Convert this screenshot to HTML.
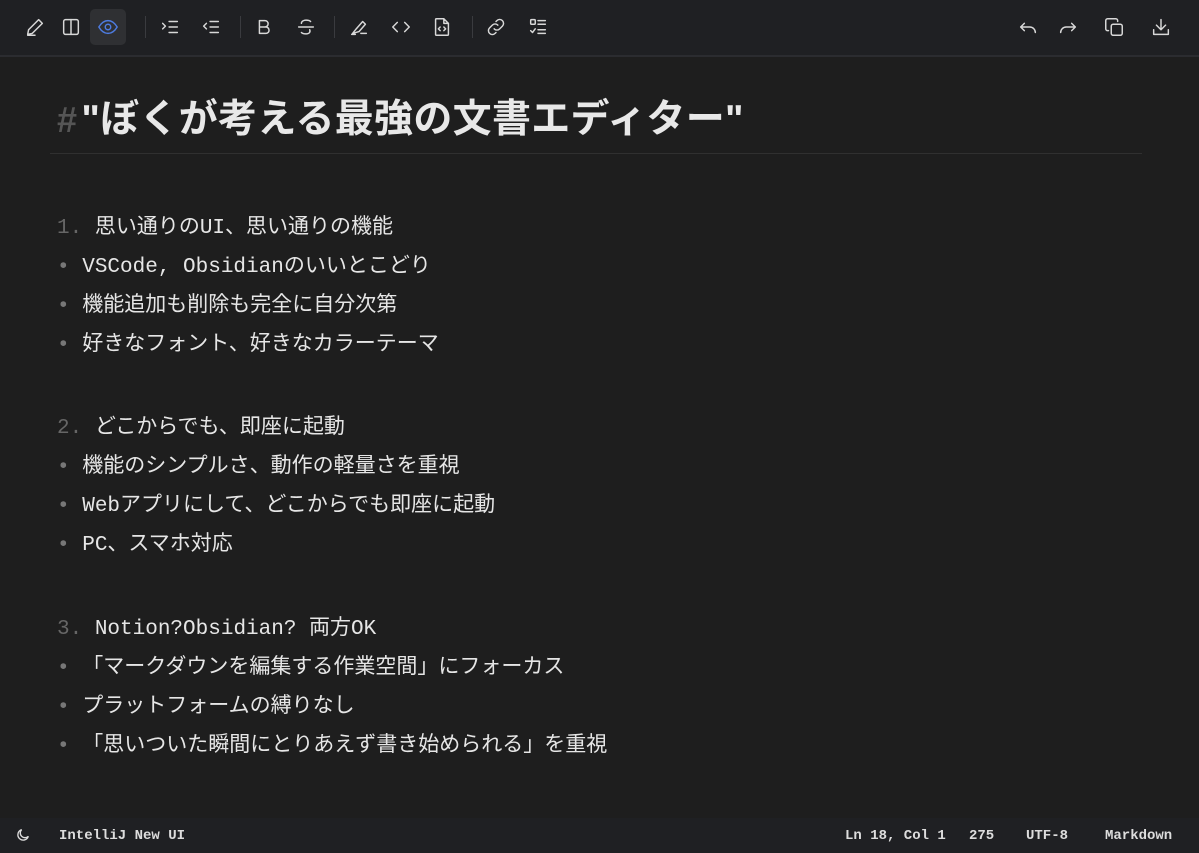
<!DOCTYPE html>
<html><head><meta charset="utf-8"><style>
*{margin:0;padding:0;box-sizing:border-box}
body{width:1199px;height:853px;background:#1e1e1e;color:#e6e6e6;overflow:hidden;position:relative;font-family:"Liberation Mono","Noto Sans CJK JP",monospace}
.tb{position:absolute;left:0;top:0;width:1199px;height:57px;background:#1f2023;border-bottom:2px solid #2b2c30}
.ic{position:absolute;top:9px;width:36px;height:36px;display:flex;align-items:center;justify-content:center}
.ic svg{width:22px;height:22px;fill:none;stroke:#d8d8d8;stroke-width:1.6;stroke-linecap:round;stroke-linejoin:round}
.sep{position:absolute;top:16px;width:1px;height:22px;background:#3a3b3f}
.h1{position:absolute;left:57px;top:88px;font-family:"Liberation Sans","Noto Sans CJK JP",sans-serif;font-weight:bold;font-size:39px;color:#e8e8e8;letter-spacing:0.3px}
.h1 span{color:#555;margin-right:4px;font-size:36px}
.hr{position:absolute;left:50px;top:153px;width:1092px;height:1px;background:#303030}
.l{position:absolute;font-size:21px;line-height:24px;white-space:nowrap}
.n{color:#666}
.b{color:#777}
.sb{position:absolute;left:0;top:818px;width:1199px;height:35px;background:#1f2023;font-size:14px;font-weight:bold;color:#ddd}
.sb div{position:absolute;top:10px}
</style></head><body>
<div class="tb">
<div class="ic" style="left:17px"><svg viewBox="0 0 24 24"><path d="M4 20l1-5L16 4l4 4L9 19z M4 21h8"/></svg></div>
<div class="ic" style="left:53px"><svg viewBox="0 0 24 24"><rect x="4" y="4" width="16" height="16" rx="2"/><path d="M12 4v16"/></svg></div>
<div class="ic" style="left:90px;background:#2f3033;border-radius:5px"><svg viewBox="0 0 24 24" style="stroke:#4d7be0"><path d="M2 12c3-5 6-7 10-7s7 2 10 7c-3 5-6 7-10 7s-7-2-10-7z"/><circle cx="12" cy="12" r="3"/></svg></div>
<div class="sep" style="left:145px"></div>
<div class="ic" style="left:152px"><svg viewBox="0 0 24 24"><path d="M4 8l3 3-3 3M11 6h9M11 12h9M11 18h9"/></svg></div>
<div class="ic" style="left:193px"><svg viewBox="0 0 24 24"><path d="M7 8l-3 3 3 3M11 6h9M11 12h9M11 18h9"/></svg></div>
<div class="sep" style="left:240px"></div>
<div class="ic" style="left:246px"><svg viewBox="0 0 24 24"><path d="M7 5h6a3.5 3.5 0 010 7H7zM7 12h7a3.5 3.5 0 010 7H7z"/></svg></div>
<div class="ic" style="left:288px"><svg viewBox="0 0 24 24"><path d="M17 6c-1-1-3-1.5-5-1.5S7 5.5 7 8M4 12h16M16 15c1 2 0 4.5-4 4.5-2 0-4-.5-5-1.5"/></svg></div>
<div class="sep" style="left:334px"></div>
<div class="ic" style="left:341px"><svg viewBox="0 0 24 24"><path d="M5 19l4-5 7-8 3 3-7 8zM4 20h4M14 19h6"/></svg></div>
<div class="ic" style="left:383px"><svg viewBox="0 0 24 24"><path d="M8 7l-5 5 5 5M16 7l5 5-5 5"/></svg></div>
<div class="ic" style="left:424px"><svg viewBox="0 0 24 24"><path d="M6 3h8l5 5v12a1 1 0 01-1 1H6a1 1 0 01-1-1V4a1 1 0 011-1zM14 3v5h5M10 12l-2 2 2 2M14 12l2 2-2 2"/></svg></div>
<div class="sep" style="left:472px"></div>
<div class="ic" style="left:478px"><svg viewBox="0 0 24 24"><path d="M10 14a4 4 0 006 0l3-3a4 4 0 00-6-6l-1 1M14 10a4 4 0 00-6 0l-3 3a4 4 0 006 6l1-1"/></svg></div>
<div class="ic" style="left:520px"><svg viewBox="0 0 24 24"><rect x="4" y="4" width="5" height="5" rx="1"/><path d="M12 5h8M12 9h8M4 16l2 2 3-4M12 15h8M12 19h8"/></svg></div>
<div class="ic" style="left:1010px"><svg viewBox="0 0 24 24"><path d="M8 8l-4 4 4 4M4 12h10a6 6 0 016 6"/></svg></div>
<div class="ic" style="left:1050px"><svg viewBox="0 0 24 24"><path d="M16 8l4 4-4 4M20 12H10a6 6 0 00-6 6"/></svg></div>
<div class="ic" style="left:1096px"><svg viewBox="0 0 24 24"><rect x="9" y="9" width="12" height="12" rx="2"/><path d="M6 16H5a2 2 0 01-2-2V5a2 2 0 012-2h9a2 2 0 012 2v1"/></svg></div>
<div class="ic" style="left:1143px"><svg viewBox="0 0 24 24"><path d="M12 4v11M7 10l5 5 5-5M4 15v5h16v-5"/></svg></div>
</div>
<div class="h1"><span>#</span>"ぼくが考える最強の文書エディター"</div>
<div class="hr"></div>
<div class="l" style="left:57px;top:217px"><span class="n">1.</span> 思い通りのUI、思い通りの機能</div>
<div class="l" style="left:57px;top:256px"><span class="b">•</span> VSCode, Obsidianのいいとこどり</div>
<div class="l" style="left:57px;top:295px"><span class="b">•</span> 機能追加も削除も完全に自分次第</div>
<div class="l" style="left:57px;top:334px"><span class="b">•</span> 好きなフォント、好きなカラーテーマ</div>
<div class="l" style="left:57px;top:417px"><span class="n">2.</span> どこからでも、即座に起動</div>
<div class="l" style="left:57px;top:456px"><span class="b">•</span> 機能のシンプルさ、動作の軽量さを重視</div>
<div class="l" style="left:57px;top:495px"><span class="b">•</span> Webアプリにして、どこからでも即座に起動</div>
<div class="l" style="left:57px;top:534px"><span class="b">•</span> PC、スマホ対応</div>
<div class="l" style="left:57px;top:618px"><span class="n">3.</span> Notion?Obsidian? 両方OK</div>
<div class="l" style="left:57px;top:657px"><span class="b">•</span> 「マークダウンを編集する作業空間」にフォーカス</div>
<div class="l" style="left:57px;top:696px"><span class="b">•</span> プラットフォームの縛りなし</div>
<div class="l" style="left:57px;top:735px"><span class="b">•</span> 「思いついた瞬間にとりあえず書き始められる」を重視</div>
<div class="sb">
<div style="left:15px;top:9px"><svg width="16" height="16" viewBox="0 0 24 24" fill="none" stroke="#ddd" stroke-width="2"><path d="M20 14A8 8 0 1110 4a6 6 0 0010 10z"/></svg></div>
<div style="left:59px">IntelliJ New UI</div>
<div style="left:845px">Ln 18, Col 1</div>
<div style="left:969px">275</div>
<div style="left:1026px">UTF-8</div>
<div style="left:1105px">Markdown</div>
</div>
</body></html>
